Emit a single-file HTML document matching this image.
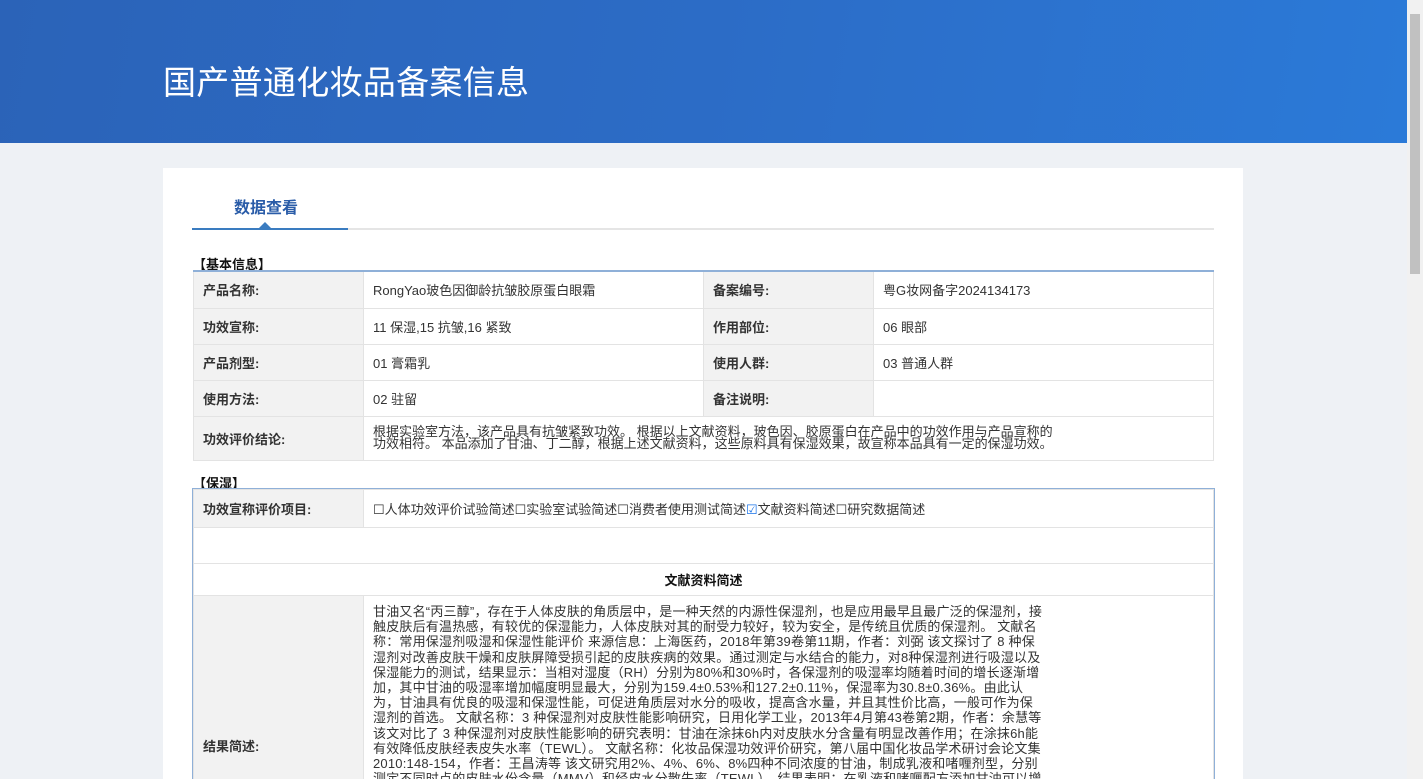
<!DOCTYPE html>
<html><head><meta charset="utf-8"><style>
*{margin:0;padding:0;box-sizing:border-box}
html,body{width:1423px;height:779px;overflow:hidden}
body{background:#eef1f5;font-family:"Liberation Sans","Noto Sans CJK SC",sans-serif;font-size:13px;color:#333;position:relative}
.hd{position:absolute;left:0;top:0;width:1407px;height:143px;background:linear-gradient(100deg,#2b63b8 0%,#2c6cc6 50%,#2b7ad8 100%);overflow:hidden}
.hd h1{position:absolute;left:163px;top:56px;font-size:33px;font-weight:normal;color:#fff;letter-spacing:0.3px}
.sb{position:absolute;left:1407px;top:0;width:16px;height:779px;background:#f1f1f1}
.sb div{position:absolute;left:3px;top:14px;width:10px;height:260px;background:#c1c1c1}
.card{position:absolute;left:163px;top:168px;width:1080px;height:611px;background:#fff;overflow:hidden}
.tab{position:absolute;left:71px;top:26px;font-size:16px;font-weight:bold;color:#2a5ca8}
.ul{position:absolute;left:29px;top:60px;width:1022px;height:2px;background:#e5e5e5}
.ul b{position:absolute;left:0;top:0;width:156px;height:2px;background:#3a7cc0}
.tri{position:absolute;left:96px;top:54px;width:0;height:0;border-left:6px solid transparent;border-right:6px solid transparent;border-bottom:6px solid #3a7cc0}
.sec{position:absolute;left:30px;font-weight:bold;color:#111;font-size:13px}
table{position:absolute;left:30px;width:1020px;border-collapse:collapse;table-layout:fixed}
td{border:1px solid #e3e3e3;padding:0 9px;vertical-align:middle}
td.l{background:#f2f2f2;font-weight:bold;color:#333}
.t1{top:102px;border-top:2px solid #8fb0d8}
.t2{top:321px;outline:1px solid #8fb0d8}
.txt{font-size:13px;line-height:15.2px;width:672px;letter-spacing:0.2px}
</style></head><body>
<div class="hd"><h1>国产普通化妆品备案信息</h1></div>
<div class="sb"><div></div></div>
<div class="card">
<div class="tab">数据查看</div>
<div class="ul"><b></b></div><div class="tri"></div>
<div class="sec" style="top:86px">【基本信息】</div>
<table class="t1">
<col style="width:170px"><col style="width:340px"><col style="width:170px"><col style="width:340px">
<tr style="height:37px"><td class="l">产品名称:</td><td>RongYao玻色因御龄抗皱胶原蛋白眼霜</td><td class="l">备案编号:</td><td>粤G妆网备字2024134173</td></tr>
<tr style="height:36px"><td class="l">功效宣称:</td><td>11 保湿,15 抗皱,16 紧致</td><td class="l">作用部位:</td><td>06 眼部</td></tr>
<tr style="height:36px"><td class="l">产品剂型:</td><td>01 膏霜乳</td><td class="l">使用人群:</td><td>03 普通人群</td></tr>
<tr style="height:36px"><td class="l">使用方法:</td><td>02 驻留</td><td class="l">备注说明:</td><td></td></tr>
<tr style="height:44px"><td class="l">功效评价结论:</td><td colspan="3"><div style="line-height:12px;white-space:nowrap;font-size:13px">根据实验室方法，该产品具有抗皱紧致功效。 根据以上文献资料，玻色因、胶原蛋白在产品中的功效作用与产品宣称的<br>功效相符。 本品添加了甘油、丁二醇，根据上述文献资料，这些原料具有保湿效果，故宣称本品具有一定的保湿功效。</div></td></tr>
</table>
<div class="sec" style="top:305px">【保湿】</div>
<table class="t2">
<col style="width:170px"><col style="width:850px">
<tr style="height:38px"><td class="l">功效宣称评价项目:</td><td>☐人体功效评价试验简述☐实验室试验简述☐消费者使用测试简述<span style="color:#1a73e8">☑</span>文献资料简述☐研究数据简述</td></tr>
<tr style="height:36px"><td colspan="2"></td></tr>
<tr style="height:32px"><td colspan="2" style="text-align:center;font-weight:bold;color:#111">文献资料简述</td></tr>
<tr style="height:300px"><td class="l">结果简述:</td><td style="vertical-align:top;padding-top:8px"><div class="txt">甘油又名“丙三醇”，存在于人体皮肤的角质层中，是一种天然的内源性保湿剂，也是应用最早且最广泛的保湿剂，接触皮肤后有温热感，有较优的保湿能力，人体皮肤对其的耐受力较好，较为安全，是传统且优质的保湿剂。 文献名称：常用保湿剂吸湿和保湿性能评价 来源信息：上海医药，2018年第39卷第11期，作者：刘弼 该文探讨了 8 种保湿剂对改善皮肤干燥和皮肤屏障受损引起的皮肤疾病的效果。通过测定与水结合的能力，对8种保湿剂进行吸湿以及保湿能力的测试，结果显示：当相对湿度（RH）分别为80%和30%时，各保湿剂的吸湿率均随着时间的增长逐渐增加，其中甘油的吸湿率增加幅度明显最大，分别为159.4±0.53%和127.2±0.11%，保湿率为30.8±0.36%。由此认为，甘油具有优良的吸湿和保湿性能，可促进角质层对水分的吸收，提高含水量，并且其性价比高，一般可作为保湿剂的首选。 文献名称：3 种保湿剂对皮肤性能影响研究，日用化学工业，2013年4月第43卷第2期，作者：余慧等 该文对比了 3 种保湿剂对皮肤性能影响的研究表明：甘油在涂抹6h内对皮肤水分含量有明显改善作用；在涂抹6h能有效降低皮肤经表皮失水率（TEWL）。 文献名称：化妆品保湿功效评价研究，第八届中国化妆品学术研讨会论文集 2010:148-154，作者：王昌涛等 该文研究用2%、4%、6%、8%四种不同浓度的甘油，制成乳液和啫喱剂型，分别测定不同时点的皮肤水份含量（MMV）和经皮水分散失率（TEWL），结果表明：在乳液和啫喱配方添加甘油可以增加皮肤的水分含量，且随着甘油的比例增加而增加，差异较显著。涂抹不同甘油含量的乳液和啫喱，受试区域水分散失量逐渐降低，且随着甘油的比例增加，其水分散失量也随之减少。如下图。 丁二醇是无色、无臭液体，是一种与甘油不同的具有清爽感觉的保湿剂。研究发现，丁二醇完全性高，对人体进行间断涂抹试验，每隔一天涂抹一次，共16天，在所有参加试验的200人中，都未</div></td></tr>
</table>
</div>
</body></html>
